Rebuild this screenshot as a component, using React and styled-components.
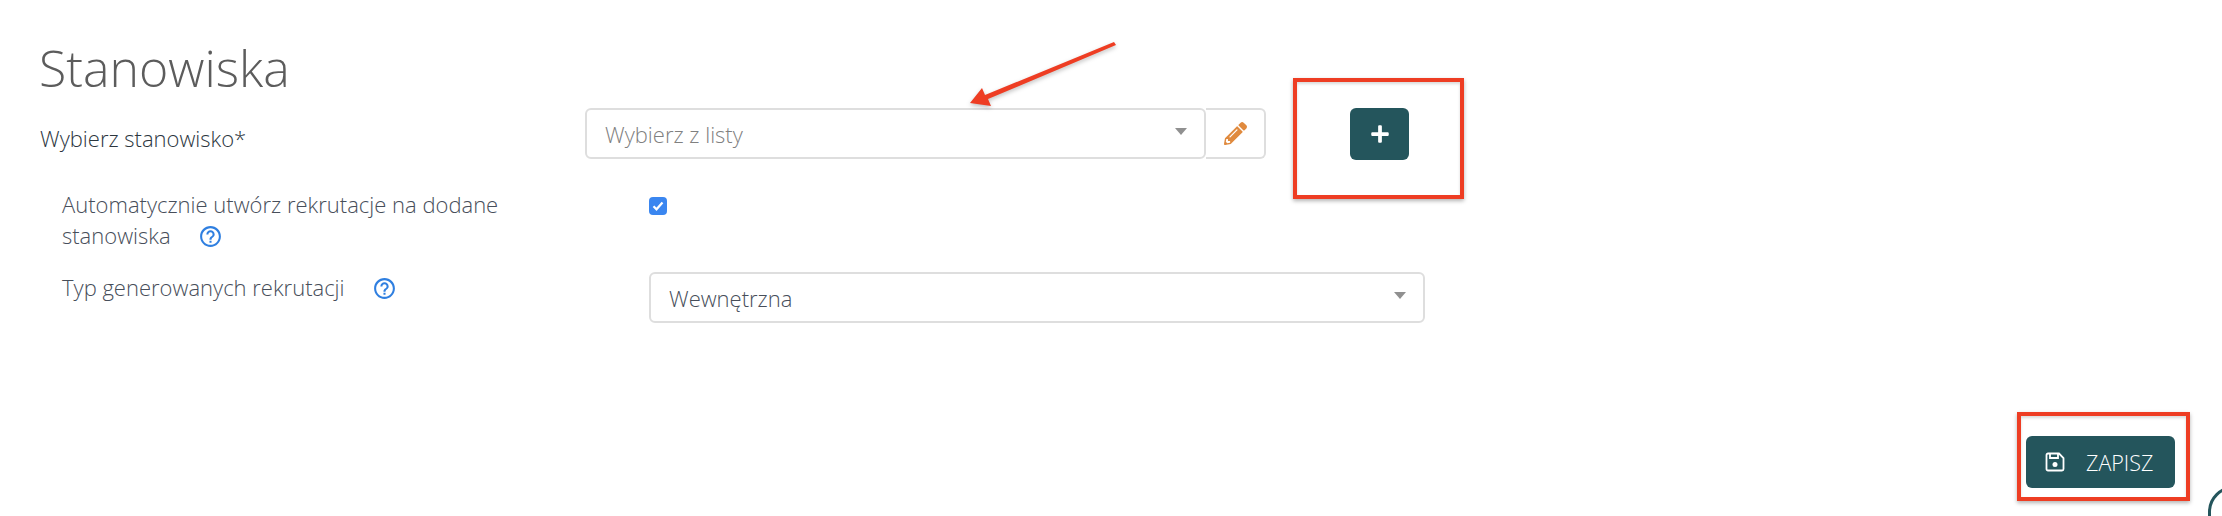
import React from 'react'
import styled, { createGlobalStyle } from 'styled-components'
import { FaPencilAlt, FaPlus } from 'react-icons/fa'
import { MdHelpOutline } from 'react-icons/md'

const GlobalStyle = createGlobalStyle`
  html, body {
    margin: 0;
    background: #fff;
  }
  body {
    font-family: "Open Sans", "Liberation Sans", sans-serif;
  }
`

const Page = styled.div`
  position: relative;
  width: 2222px;
  height: 516px;
  overflow: hidden;
  display: flex;
  flex-direction: column;
`

const Title = styled.h1`
  margin: 38px 0 0 39px;
  height: 60px;
  font-size: 50px;
  line-height: 60px;
  font-weight: 300;
  color: #5c5c5c;
`

const MainRow = styled.div`
  display: flex;
  margin: 10px 0 0 40px;
`

const MainLabel = styled.label`
  width: 545px;
  padding-top: 15px;
  font-size: 22px;
  line-height: 31px;
  font-weight: 300;
  color: #2c363e;
`

const Select = styled.div`
  box-sizing: border-box;
  width: ${(p) => p.$width}px;
  height: 51px;
  display: flex;
  align-items: center;
  justify-content: space-between;
  padding: 0 20px 0 18px;
  border: 2px solid #dedede;
  border-radius: 6px;
  font-size: 22px;
  font-weight: 300;
  color: ${(p) => (p.$placeholder ? '#808080' : '#474e5a')};
`

const Caret = styled.span`
  width: 0;
  height: 0;
  margin: -4px -3px 0 0;
  border-left: 6px solid transparent;
  border-right: 6px solid transparent;
  border-top: 7px solid #909090;
`

const EditButton = styled.button`
  box-sizing: border-box;
  width: 60px;
  height: 51px;
  padding: 0;
  display: flex;
  align-items: center;
  justify-content: center;
  background: #fff;
  border: 2px solid #dedede;
  border-left: 0;
  border-radius: 0 6px 6px 0;
  color: #e08a3e;
  font-size: 23px;
`

const AddButton = styled.button`
  box-sizing: border-box;
  width: 59px;
  height: 52px;
  margin-left: 84px;
  padding: 0;
  display: flex;
  align-items: center;
  justify-content: center;
  background: #24555c;
  border: 0;
  border-radius: 6px;
  color: #fff;
  font-size: 20px;
`

const OptionRow = styled.div`
  display: flex;
  align-items: flex-start;
  margin: ${(p) => p.$top}px 0 0 62px;
`

const OptionLabel = styled.label`
  width: 587px;
  padding-right: 90px;
  box-sizing: border-box;
  font-size: 22px;
  line-height: 31px;
  font-weight: 300;
  color: #474e5a;
`

const Help = styled(MdHelpOutline)`
  margin-left: 27px;
  vertical-align: -5px;
  font-size: 25px;
  color: #2f7fe0;
`

const Checkbox = styled.span`
  box-sizing: border-box;
  width: 18px;
  height: 18px;
  margin-top: 8px;
  display: flex;
  align-items: center;
  justify-content: center;
  background: #3a86f0;
  border-radius: 4px;
`

const Footer = styled.div`
  display: flex;
  justify-content: flex-end;
  margin-top: auto;
  padding: 0 47px 28px 0;
`

const SaveButton = styled.button`
  box-sizing: border-box;
  width: 149px;
  height: 52px;
  padding: 0 0 0 19px;
  display: flex;
  align-items: center;
  gap: 21px;
  background: #24555c;
  border: 0;
  border-radius: 6px;
  color: #fff;
  font-family: inherit;
  font-size: 21.500px;
  font-weight: 300;
`

const RedBox = styled.div`
  position: absolute;
  box-sizing: border-box;
  left: ${(p) => p.$x}px;
  top: ${(p) => p.$y}px;
  width: ${(p) => p.$w}px;
  height: ${(p) => p.$h}px;
  border: 4px solid #ee3d23;
  box-shadow: 0 2px 4px rgba(0, 0, 0, 0.3), inset 0 2px 3px rgba(0, 0, 0, 0.15);
`

const Arrow = styled.svg`
  position: absolute;
  left: 960px;
  top: 36px;
  filter: drop-shadow(0 2px 2px rgba(0, 0, 0, 0.25));
`

const ChatBubble = styled.div`
  position: absolute;
  left: 2208px;
  top: 486px;
  width: 100px;
  height: 100px;
  box-sizing: border-box;
  border: 3px solid #24555c;
  border-radius: 26px;
  background: #fff;
`

export default function App() {
  return (
    <Page>
      <GlobalStyle />
      <Title>Stanowiska</Title>
      <MainRow>
        <MainLabel>Wybierz stanowisko*</MainLabel>
        <Select $width={621} $placeholder>
          Wybierz z listy
          <Caret />
        </Select>
        <EditButton aria-label="edytuj"><FaPencilAlt /></EditButton>
        <AddButton aria-label="dodaj"><FaPlus /></AddButton>
      </MainRow>
      <OptionRow $top={29}>
        <OptionLabel>
          Automatycznie utwórz rekrutacje na dodane stanowiska
          <Help />
        </OptionLabel>
        <Checkbox>
          <svg width="12" height="10" viewBox="0 0 12 10">
            <path d="M1.500 5.200 4.500 8.300 10.500 1.500" fill="none" stroke="#fff" strokeWidth="2.200" />
          </svg>
        </Checkbox>
      </OptionRow>
      <OptionRow $top={21}>
        <OptionLabel>
          Typ generowanych rekrutacji
          <Help />
        </OptionLabel>
        <Select $width={776}>
          Wewnętrzna
          <Caret />
        </Select>
      </OptionRow>
      <Footer>
        <SaveButton>
          <svg width="20" height="20" viewBox="0 0 20 20" fill="none" stroke="#fff" strokeWidth="1.800">
            <path d="M3 1.500h11l4.500 4.500v11a1.500 1.500 0 0 1-1.500 1.500h-14a1.500 1.500 0 0 1-1.500-1.500v-14a1.500 1.500 0 0 1 1.500-1.500z" />
            <path d="M5 1.500v4.500h8v-4.500" />
            <circle cx="10" cy="12.500" r="2.500" fill="#fff" stroke="none" />
          </svg>
          ZAPISZ
        </SaveButton>
      </Footer>
      <RedBox $x={1293} $y={78} $w={171} $h={121} />
      <RedBox $x={2017} $y={412} $w={173} $h={89} />
      <Arrow width="160" height="72" viewBox="0 0 160 72">
        <path d="M10 67 22 52 25 59 154 6 156 9 28 63 31 70Z" fill="#ee3d23" />
      </Arrow>
      <ChatBubble />
    </Page>
  )
}
